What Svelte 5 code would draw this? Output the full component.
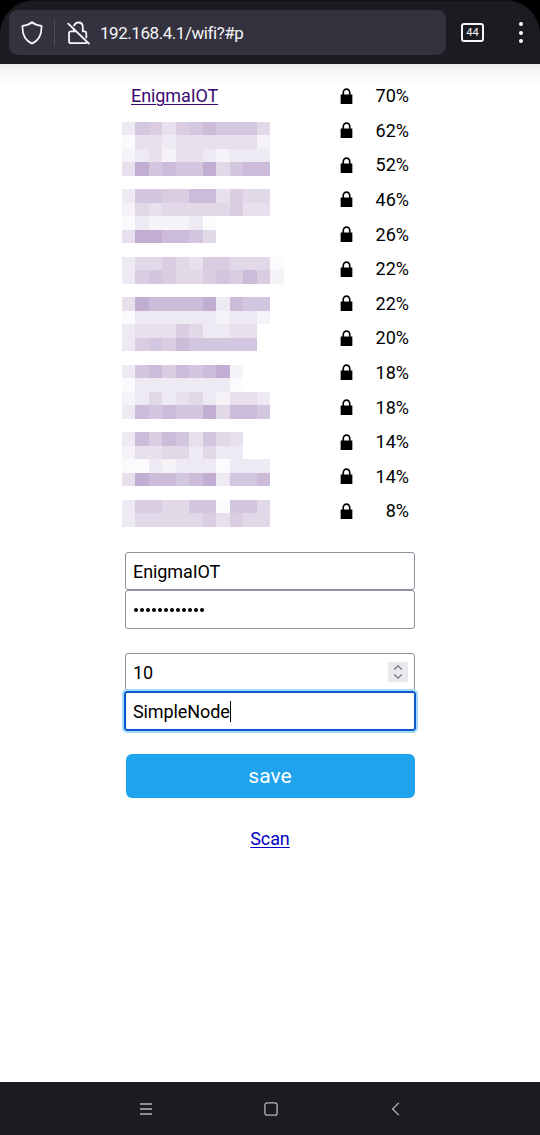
<script>
  const signals = [70, 62, 52, 46, 26, 22, 22, 20, 18, 18, 14, 14, 8];

  // One digit per tile: 0 is clear, 9 is the darkest tint.
  const mosaic = [
    '37646787775', '14434444442', '23424432333', '49787795788', '',
    '37766884655', '25455555644', '1322231', '4998875', '',
    '355654665551', '367655676862', '',
    '49888893877', '13333332332', '3444653344', '3676877777', '',
    '378687892', '133333331', '23534532443', '38787795887', '',
    '386874754', '244553533', '11323331333', '49887893778', '',
    '36655771775', '35555564655',
  ];
  const tints = ['transparent', '#fbfafd', '#f5f3f8', '#eeeaf3', '#e8e1ed', '#e1d9e8', '#dacde2', '#d3c6df', '#ccbcd9', '#c2aed2'];
  const tiles = mosaic.flatMap((row) => [...row.padEnd(12, '0')].map((d) => tints[+d]));
</script>

<div class="screen">
  <div class="top">
    <header>
      <div class="address">
        <svg class="shield" width="22" height="24" viewBox="0 0 22 24"><path d="M11 1.3 C8.7 3.3 5.2 4.5 1.5 4.9 C1.1 12.5 2.8 19 11 22.6 C19.2 19 20.9 12.5 20.5 4.9 C16.8 4.5 13.3 3.3 11 1.3Z" /></svg>
        <span class="divider"></span>
        <svg class="unlock" width="23" height="24" viewBox="0 0 23 24">
          <path d="M7.1 4.5 C8 2.5 9.5 1.5 11.3 1.5 C14 1.5 15.8 3.4 15.8 6 V10.3 H17.3 Q19.3 10.3 19.3 12.3 V16.5 M8 10.3 H4 Q2 10.3 2 12.3 V20.2 Q2 22.2 4 22.2 H19 M6.8 8 V10.3 M1.2 2.6 L21.8 22.5" />
        </svg>
        <span class="url">192.168.4.1/wifi?#p</span>
      </div>
      <span class="tabs">44</span>
      <span class="menu"><i></i><i></i><i></i></span>
    </header>
  </div>

  <main>
    <div class="content">
      <div class="networks">
        {#each signals as q, i}
          <div class="network">
            {#if i === 0}<a class="ssid" href="#p">EnigmaIOT</a>{:else}<span></span>{/if}
            <span class="quality">
              <svg width="13" height="16" viewBox="0 0 14 16" preserveAspectRatio="none"><path d="M.7 6.5H2.6V4.7a4.4 4.4 0 0 1 8.8 0V6.5h1.9V16H.7zM4.4 6.5h5.2V4.7a2.6 2.6 0 0 0-5.2 0z" /></svg>
              <b>{q}%</b>
            </span>
          </div>
        {/each}
        <div class="mosaic">
          {#each tiles as tint}<i style:background={tint}></i>{/each}
        </div>
      </div>

      <div class="field">EnigmaIOT</div>
      <div class="field dots">{#each Array(12) as _}<i></i>{/each}</div>
      <div class="field number">
        10
        <span class="spinner">
          <svg width="20" height="20" viewBox="0 0 20 20"><path d="M6.2 7.4 L10 3.8 L13.8 7.4 M6.2 12.4 L10 16 L13.8 12.4" /></svg>
        </span>
      </div>
      <div class="field focused">SimpleNode<span class="caret"></span></div>
      <button>save</button>
      <a class="scan" href="#scan">Scan</a>
    </div>
  </main>

  <footer>
    <svg width="14" height="14" viewBox="0 0 14 14"><path d="M1 2h12M1 7h12M1 12h12" /></svg>
    <svg width="14" height="14" viewBox="0 0 14 14"><rect x=".9" y=".9" width="12.2" height="12.2" rx="2.2" /></svg>
    <svg width="14" height="14" viewBox="0 0 14 14"><path d="M9.8 .9 L3.6 7 L9.8 13.1" /></svg>
  </footer>
</div>

<style>
  .screen { width: 540px; height: 1135px; display: flex; flex-direction: column; background: #fff; font-family: Roboto, sans-serif; color: #000; overflow: hidden; }
  .top { background: #000; flex: none; }
  header { box-sizing: border-box; height: 64px; padding: 10px 0 0 9px; display: flex; align-items: flex-start; background: #1c1b22; border-top: 1px solid #131217; border-radius: 34px 34px 0 0; }
  .address { box-sizing: border-box; width: 436.5px; height: 45px; padding-left: 11.5px; margin-top: -1px; border-radius: 9px; background: #34323e; display: flex; align-items: center; color: #f6f5f9; }
  header svg path { fill: none; stroke: #f6f5f9; stroke-width: 1.8; stroke-linejoin: round; stroke-linecap: round; }
  .divider { width: 1px; height: 27px; margin: 0 12.5px 0 11px; background: #4c4a59; }
  .url { margin-left: 10px; font-size: 17px; letter-spacing: -0.45px; line-height: 24px; }
  .tabs { box-sizing: border-box; width: 23px; height: 19px; margin: 12px 0 0 15.5px; border: 2px solid #f6f5f9; border-radius: 3px; color: #f6f5f9; font-size: 11px; line-height: 15px; font-weight: 400; text-align: center; }
  .menu { display: flex; flex-direction: column; gap: 4.5px; margin: 11px 0 0 34.5px; }
  .menu i { width: 4px; height: 4px; border-radius: 50%; background: #fff; }

  main { flex: 1; background: linear-gradient(#e8e8e8 0, #f4f4f4 5px, #fafafa 13px, #fff 22px); }
  .content { width: 290px; margin: 0 auto; padding-top: 14.4px; font-size: 18px; letter-spacing: -0.1px; }
  .networks { position: relative; height: 473.5px; }
  .network { display: flex; justify-content: space-between; align-items: center; height: 34.6px; padding: 0 6px; }
  .ssid { color: #3d0a75; text-decoration-thickness: 1px; text-underline-offset: 2px; }
  .quality { display: flex; align-items: center; }
  .quality b { width: 56px; text-align: right; font-weight: 400; letter-spacing: 0; }
  .mosaic { position: absolute; left: -3.5px; top: 43.2px; display: grid; grid-template-columns: repeat(12, 13.5px); grid-auto-rows: 13.5px; }

  .field { box-sizing: border-box; height: 38.5px; padding: 0 7px; border: 1px solid #8f8f9d; border-radius: 3px; display: flex; align-items: center; background: #fff; }
  .dots { gap: 2px; padding-left: 8px; margin-bottom: 24px; }
  .dots i { width: 4px; height: 4px; border-radius: 50%; background: #000; }
  .number { justify-content: space-between; padding-right: 6.5px; }
  .spinner { width: 20px; height: 20px; background: #e9e9ed; }
  .spinner svg { display: block; }
  .spinner path { fill: none; stroke: #7f7f8d; stroke-width: 1.4; }
  .focused { position: relative; height: 39.5px; outline: 2px solid #a9d9fa; border: 2px solid #0a58c9; border-radius: 3px; margin: 0 -1px; }
  .caret { width: 1px; height: 21px; background: #000; }
  button { display: block; width: 289px; height: 44.5px; margin: 23px 0 0 .5px; padding: 0; border: 0; border-radius: 6px; background: #1fa3ec; color: #fff; font: 21px Roboto, sans-serif; }
  .scan { display: block; width: fit-content; margin: 30px auto 0; line-height: 22px; color: #0000c4; text-decoration-thickness: 1px; text-underline-offset: 2px; }

  footer { box-sizing: border-box; flex: none; height: 53px; padding-left: 1px; background: #1c1b22; display: flex; justify-content: center; align-items: center; gap: 111px; }
  footer svg path, footer svg rect { fill: none; stroke: #b5b5ba; stroke-width: 1.3; }
</style>
